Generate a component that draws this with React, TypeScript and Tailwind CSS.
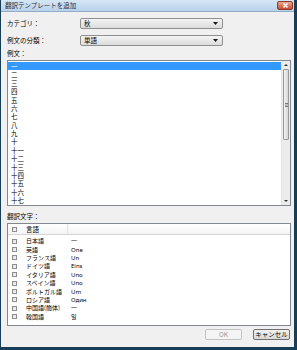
const examples = ["一", "二", "三", "四", "五", "六", "七", "八", "九", "十", "十一", "十二", "十三", "十四", "十五", "十六", "十七"];

const translations = [
  { lang: "日本語", text: "一" },
  { lang: "英語", text: "One" },
  { lang: "フランス語", text: "Un" },
  { lang: "ドイツ語", text: "Eins" },
  { lang: "イタリア語", text: "Uno" },
  { lang: "スペイン語", text: "Uno" },
  { lang: "ポルトガル語", text: "Um" },
  { lang: "ロシア語", text: "Один" },
  { lang: "中国語(簡体)", text: "一" },
  { lang: "韓国語", text: "일" },
];

function Combo({ value }: { value: string }) {
  return (
    <div className="w-[143px] h-[11px] flex items-center justify-between pl-[3px] pr-[4px] border border-[#8e8f8f] rounded-[2px] bg-gradient-to-b from-[#f4f4f4] to-[#dcdcdc]">
      <span>{value}</span>
      <svg width="5" height="3" viewBox="0 0 5 3">
        <path d="M0 0h5L2.5 3z" fill="#1a1a1a" />
      </svg>
    </div>
  );
}

function Check() {
  return <div className="w-[5px] h-[5px] border border-[#8f8f8f] bg-gradient-to-br from-[#dcdcdc] to-[#fbfbfb]" />;
}

function Arrow({ up }: { up?: boolean }) {
  return (
    <div className="h-[8px] flex items-center justify-center">
      <svg width="4" height="2" viewBox="0 0 4 2">
        <path d={up ? "M0 2h4L2 0z" : "M0 0h4L2 2z"} fill="#333" />
      </svg>
    </div>
  );
}

export default function App() {
  return (
    <div className="w-[297px] h-[350px] flex flex-col bg-[#f0f0f0] border-l border-r-[3px] border-b-[3px] border-[#183e57] text-[6.5px] leading-none text-black font-['Noto_Sans_CJK_JP','Noto_Sans',sans-serif]">
      {/* title bar */}
      <div className="h-[12px] flex items-center justify-between pl-[4px] pr-[1px] bg-gradient-to-b from-[#d6e6f7] to-[#b9d1ea] border-b border-[#93adc9]">
        <span className="text-[#1e2a38]">翻訳テンプレートを追加</span>
        <div className="w-[16px] h-[9px] flex items-center justify-center rounded-[2px] border border-[#8b3b28] bg-gradient-to-b from-[#e9a893] to-[#c94b2f]">
          <svg width="5" height="5" viewBox="0 0 5 5">
            <path d="M0.5 0.5l4 4M4.5 0.5l-4 4" stroke="#fff" strokeWidth="1.4" />
          </svg>
        </div>
      </div>

      <div className="flex-1 flex flex-col pl-[6px] pr-[3px]">
        <div className="mt-[6px] h-[11px] flex items-center">
          <span className="w-[73px]">カテゴリ：</span>
          <Combo value="秋" />
        </div>
        <div className="mt-[6px] h-[11px] flex items-center">
          <span className="w-[73px]">例文の分類：</span>
          <Combo value="単語" />
        </div>
        <div className="h-[14px] flex items-center">例文：</div>

        {/* example list */}
        <div className="h-[146px] flex border border-[#828790] bg-white">
          <div className="flex-1 pt-[1px]">
            {examples.map((e, i) => (
              <div
                key={e}
                className={`h-[8.4px] flex items-center pl-[3px] ${i === 0 ? "bg-[#3399ff] text-white" : ""}`}
              >
                {e}
              </div>
            ))}
          </div>
          <div className="w-[9px] flex flex-col bg-[#ececec] border-l border-[#e3e3e3]">
            <Arrow up />
            <div className="h-[71px] mx-[1px] flex items-center justify-center rounded-[1px] border border-[#979797] bg-gradient-to-r from-[#f3f3f3] to-[#d6d6d6]">
              <div className="w-[3px] h-[4px] border-y border-[#7a7a7a] bg-[#bdbdbd]" />
            </div>
            <div className="flex-1" />
            <Arrow />
          </div>
        </div>

        <div className="h-[17px] flex items-center pt-[4px]">翻訳文字：</div>

        {/* translation table */}
        <div className="h-[103px] flex flex-col border border-[#828790] bg-white">
          <div className="h-[11px] flex items-center border-b border-[#d5d5d5] bg-gradient-to-b from-white to-[#f4f4f4]">
            <div className="w-[60px] h-full flex items-center pl-[4px] border-r border-[#e2e2e2]">
              <Check />
              <span className="ml-[9px]">言語</span>
            </div>
          </div>
          <div className="pt-[2px]">
            {translations.map((t) => (
              <div key={t.lang} className="h-[8.4px] flex items-center pl-[4px] text-[6px]">
                <Check />
                <span className="ml-[9px] w-[45px]">{t.lang}</span>
                <span className="font-['Noto_Sans','Noto_Sans_CJK_KR',sans-serif]">{t.text}</span>
              </div>
            ))}
          </div>
        </div>

        <div className="mt-[3px] mr-[1px] flex justify-end gap-[11px]">
          <div className="w-[37px] h-[11px] flex items-center justify-center rounded-[2px] border border-[#c2c2c2] bg-[#f4f4f4] text-[#9a9a9a]">
            OK
          </div>
          <div className="w-[37px] h-[11px] flex items-center justify-center rounded-[2px] border border-[#6f6f6f] bg-gradient-to-b from-[#f2f2f2] to-[#d9d9d9]">
            キャンセル
          </div>
        </div>
      </div>
    </div>
  );
}
